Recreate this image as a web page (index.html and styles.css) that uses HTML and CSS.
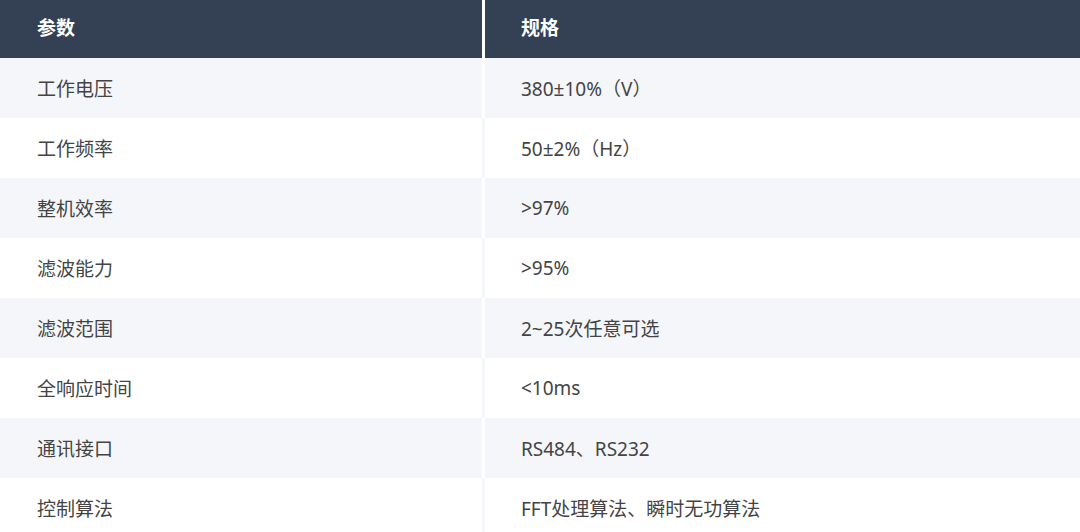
FILE: index.html
```html
<!DOCTYPE html>
<html lang="zh">
<head>
<meta charset="utf-8">
<link rel="stylesheet" href="styles.css">
</head>
<body>
<div class="spec-table">
  <div class="row head"><div class="cell c1">参数</div><div class="cell c2">规格</div></div>
  <div class="row odd"><div class="cell c1">工作电压</div><div class="cell c2">380±10%（V）</div></div>
  <div class="row even"><div class="cell c1">工作频率</div><div class="cell c2">50±2%（Hz）</div></div>
  <div class="row odd"><div class="cell c1">整机效率</div><div class="cell c2">&gt;97%</div></div>
  <div class="row even"><div class="cell c1">滤波能力</div><div class="cell c2">&gt;95%</div></div>
  <div class="row odd"><div class="cell c1">滤波范围</div><div class="cell c2">2~25次任意可选</div></div>
  <div class="row even"><div class="cell c1">全响应时间</div><div class="cell c2">&lt;10ms</div></div>
  <div class="row odd"><div class="cell c1">通讯接口</div><div class="cell c2">RS484、RS232</div></div>
  <div class="row even"><div class="cell c1">控制算法</div><div class="cell c2">FFT处理算法、瞬时无功算法</div></div>
</div>
</body>
</html>
```

FILE: styles.css
```css
html, body {
  margin: 0;
  padding: 0;
  background: #ffffff;
  overflow: hidden;
}
body {
  font-family: "Noto Sans", "Noto Sans CJK SC", sans-serif;
  font-size: 19px;
  color: #444444;
}
.spec-table {
  display: flex;
  flex-direction: column;
  width: 1080px;
}
.row {
  display: flex;
  height: 60px;
}
.row.head {
  height: 58px;
  background: #344053;
  color: #ffffff;
  font-weight: 700;
  font-size: 19px;
}
.row.head .cell {
  padding-bottom: 4px;
}
.cell {
  display: flex;
  align-items: center;
  padding-left: 37px;
  box-sizing: border-box;
}
.c1 {
  width: 482px;
}
.c2 {
  flex: 1;
  padding-left: 36px;
  border-left: 3px solid #ffffff;
}
.row.odd {
  background: #f5f6fa;
}
.row.even {
  background: #ffffff;
}
.row.even .c2 {
  border-left-color: #f5f6fa;
}
```
